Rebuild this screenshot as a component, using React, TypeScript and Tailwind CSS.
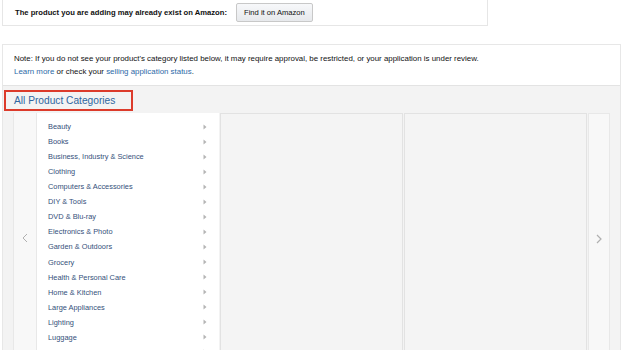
import React from "react";

const cats = [
  "Beauty",
  "Books",
  "Business, Industry & Science",
  "Clothing",
  "Computers & Accessories",
  "DIY & Tools",
  "DVD & Blu-ray",
  "Electronics & Photo",
  "Garden & Outdoors",
  "Grocery",
  "Health & Personal Care",
  "Home & Kitchen",
  "Large Appliances",
  "Lighting",
  "Luggage",
  "Musical Instruments & DJ",
];

function Tri() {
  return (
    <svg width="4" height="6" viewBox="0 0 4 6" className="shrink-0">
      <path d="M0.5 0.5 L3.5 3 L0.5 5.5 Z" fill="#b5b5b5" />
    </svg>
  );
}

export default function App() {
  return (
    <div
      className="w-[624px] h-[350px] overflow-hidden bg-white relative"
      style={{ fontFamily: '"Liberation Sans", Arial, sans-serif' }}
    >
      {/* top box */}
      <div className="ml-[2px] w-[486px] h-[26px] border-x border-b border-[#e6e6e6] flex items-center pl-[12px]">
        <span className="text-[7.65px] font-bold text-[#111]">
          The product you are adding may already exist on Amazon:
        </span>
        <button className="ml-[9px] h-[19px] px-[7px] text-[7.6px] text-[#111] border border-[#c8c8c8] rounded-[2px] bg-gradient-to-b from-[#f7f8fa] to-[#e7e9ec]">
          Find it on Amazon
        </button>
      </div>

      {/* panel */}
      <div className="mt-[18px] ml-[2px] w-[619px] h-[320px] border border-[#e7e7e7] flex flex-col">
        <div className="bg-white h-[41px] pl-[11px] pt-[7px] text-[7.9px] leading-[13px] text-[#111] border-b border-[#e3e3e3]">
          <div>
            Note: If you do not see your product's category listed below, it may
            require approval, be restricted, or your application is under review.
          </div>
          <div>
            <span className="text-[#2d6aa8]">Learn more</span> or check your{" "}
            <span className="text-[#2d6aa8]">selling application status</span>.
          </div>
        </div>
        <div className="flex-1 bg-[#f3f3f3] flex flex-col">
          <div className="ml-[1px] mt-[4px] w-[129px] h-[21px] border-[2px] border-[#dc3b2b] flex items-center pl-[8px]">
            <span className="text-[10.2px] text-[#2f66a0]">All Product Categories</span>
          </div>
          <div className="flex flex-1 mt-[2px] ml-[10px]">
            <div className="w-[24px] bg-[#f8f8f8] border-x border-[#e8e8e8] flex items-center justify-center">
              <svg width="6" height="10" viewBox="0 0 6 10">
                <path d="M5 1 L1 5 L5 9" fill="none" stroke="#b0b0b0" strokeWidth="1" />
              </svg>
            </div>
            <div className="w-[182px] bg-white pt-[6px] pl-[11px] pr-[12px]">
              {cats.map((c) => (
                <div key={c} className="h-[15.07px] flex items-center justify-between">
                  <span className="text-[7.4px] text-[#34507a]">{c}</span>
                  <Tri />
                </div>
              ))}
            </div>
            <div className="w-[183px] ml-[1px] bg-[#f4f4f4] border border-b-0 border-[#e2e2e2]" />
            <div className="w-[183px] ml-[1px] bg-[#f4f4f4] border border-b-0 border-[#e2e2e2]" />
            <div className="w-[22px] ml-[1px] bg-[#f8f8f8] border-x border-t border-[#e8e8e8] flex items-center justify-center">
              <svg width="6" height="10" viewBox="0 0 6 10">
                <path d="M1 1 L5 5 L1 9" fill="none" stroke="#b0b0b0" strokeWidth="1.2" />
              </svg>
            </div>
          </div>
        </div>
      </div>
    </div>
  );
}
